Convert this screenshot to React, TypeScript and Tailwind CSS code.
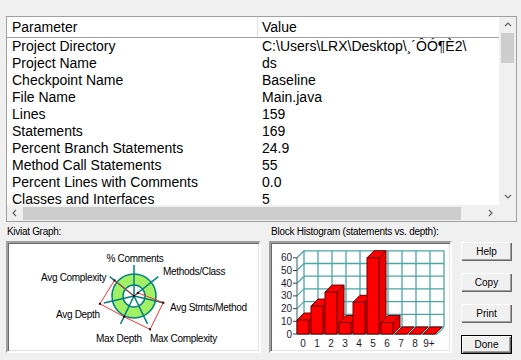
import React from "react";

const ROWS: [string, string][] = [
  ["Project Directory", "C:\\Users\\LRX\\Desktop\\¸´ÔÓ¶È2\\"],
  ["Project Name", "ds"],
  ["Checkpoint Name", "Baseline"],
  ["File Name", "Main.java"],
  ["Lines", "159"],
  ["Statements", "169"],
  ["Percent Branch Statements", "24.9"],
  ["Method Call Statements", "55"],
  ["Percent Lines with Comments", "0.0"],
  ["Classes and Interfaces", "5"],
];

// kiviat: 7 axes clockwise from the top, r = plotted radius of the red polygon
const CX = 134;
const CY = 296;
const AXES = [
  { label: "% Comments", r: 0, lx: 135, ly: 261.5, anchor: "middle" },
  { label: "Methods/Class", r: 5, lx: 163, ly: 274.5, anchor: "start" },
  { label: "Avg Stmts/Method", r: 30, lx: 170, ly: 310.5, anchor: "start" },
  { label: "Max Complexity", r: 37, lx: 150, ly: 341.5, anchor: "start" },
  { label: "Max Depth", r: 23, lx: 96, ly: 341.5, anchor: "start" },
  { label: "Avg Depth", r: 35, lx: 56, ly: 317.5, anchor: "start" },
  { label: "Avg Complexity", r: 25, lx: 41, ly: 280.5, anchor: "start" },
];

const pt = (i: number, r: number) => {
  const a = ((-90 + (i * 360) / 7) * Math.PI) / 180;
  return [CX + r * Math.cos(a), CY + r * Math.sin(a)];
};

// histogram geometry (page coords)
const X0 = 297;
const Y0 = 334;
const K = 1.27;
const D = 7;
const SLOT = 14;
const BW = 12;
const BLOCKS = [
  { label: "0", v: 11 },
  { label: "1", v: 22 },
  { label: "2", v: 33 },
  { label: "3", v: 9 },
  { label: "4", v: 25 },
  { label: "5", v: 60 },
  { label: "6", v: 9 },
  { label: "7", v: 0 },
  { label: "8", v: 0 },
  { label: "9+", v: 0 },
];
const LEVELS = [0, 10, 20, 30, 40, 50, 60];
const GRID = "#4aa6a6";

function Chevron({ dir }: { dir: "up" | "down" | "left" | "right" }) {
  const pts = {
    up: "1,5 4,2 7,5",
    down: "1,2 4,5 7,2",
    left: "5,1 2,4 5,7",
    right: "2,1 5,4 2,7",
  }[dir];
  return (
    <svg width="8" height="8" viewBox="0 0 8 8" className="block">
      <polyline points={pts} fill="none" stroke="#606060" strokeWidth="1.2" />
    </svg>
  );
}

function Kiviat() {
  const poly = AXES.map((a, i) => pt(i, a.r).join(",")).join(" ");
  return (
    <svg width="251" height="108" viewBox="8 243 251 108" className="block">
      <circle cx={CX} cy={CY} r={22} fill="#a2f064" stroke="#008080" strokeWidth="1.5" />
      <circle cx={CX} cy={CY} r={11} fill="#ffffff" stroke="#008080" strokeWidth="1.5" />
      {AXES.map((a, i) => {
        const [x, y] = pt(i, 31);
        return <line key={a.label} x1={CX} y1={CY} x2={x} y2={y} stroke="#008080" strokeWidth="1.5" />;
      })}
      <polygon points={poly} fill="none" stroke="#ff3030" strokeWidth="1" />
      {AXES.map((a, i) => {
        const [x, y] = pt(i, a.r);
        return <rect key={a.label} x={x - 1} y={y - 1} width="2" height="2" fill="#300000" />;
      })}
      {AXES.map((a) => (
        <text key={a.label} x={a.lx} y={a.ly} fontSize="10" letterSpacing="-0.3" textAnchor={a.anchor} fill="#000000">
          {a.label}
        </text>
      ))}
    </svg>
  );
}

function Histogram() {
  const right = X0 + SLOT * 10;
  return (
    <svg width="179" height="108" viewBox="271 243 179 108" className="block">
      {/* back wall */}
      {LEVELS.map((v) => (
        <line key={"h" + v} x1={X0 + D} y1={Y0 - v * K - D} x2={right + D} y2={Y0 - v * K - D} stroke={GRID} strokeWidth="1.3" />
      ))}
      {Array.from({ length: 11 }).map((_, i) => (
        <line key={"v" + i} x1={X0 + D + i * SLOT} y1={Y0 - D} x2={X0 + D + i * SLOT} y2={Y0 - D - 60 * K} stroke={GRID} strokeWidth="1.3" />
      ))}
      {/* left wall */}
      {LEVELS.map((v) => (
        <line key={"d" + v} x1={X0} y1={Y0 - v * K} x2={X0 + D} y2={Y0 - v * K - D} stroke={GRID} strokeWidth="1.3" />
      ))}
      <line x1={X0} y1={Y0 - 60 * K} x2={X0} y2={Y0} stroke="#5a8a8a" strokeWidth="1.3" />
      {/* floor */}
      <line x1={X0} y1={Y0} x2={right} y2={Y0} stroke="#5a8a8a" strokeWidth="1.3" />
      <line x1={right} y1={Y0} x2={right + D} y2={Y0 - D} stroke={GRID} strokeWidth="1.3" />
      {/* y ticks + labels */}
      {LEVELS.map((v) => (
        <g key={"t" + v}>
          <line x1={X0 - 4} y1={Y0 - v * K} x2={X0} y2={Y0 - v * K} stroke="#404040" strokeWidth="1" />
          <text x={292} y={Y0 - v * K + 3.5} fontSize="10" textAnchor="end" fill="#1a1a2a">
            {v}
          </text>
        </g>
      ))}
      {/* bars */}
      {BLOCKS.map((b, i) => {
        const x = X0 + i * SLOT;
        const yt = Y0 - b.v * K;
        return (
          <g key={b.label} stroke="#700000" strokeWidth="1" strokeLinejoin="round">
            {b.v > 0 && (
              <polygon points={`${x + BW},${yt} ${x + BW + D},${yt - D} ${x + BW + D},${Y0 - D} ${x + BW},${Y0}`} fill="#ee0000" />
            )}
            <polygon points={`${x},${yt} ${x + D},${yt - D} ${x + BW + D},${yt - D} ${x + BW},${yt}`} fill="#ff0000" />
            {b.v > 0 && <rect x={x} y={yt} width={BW} height={Y0 - yt} fill="#ff0000" />}
          </g>
        );
      })}
      {BLOCKS.map((b, i) => (
        <text key={"l" + b.label} x={X0 + i * SLOT + 6} y={346.5} fontSize="10" textAnchor="middle" fill="#1a1a2a">
          {b.label}
        </text>
      ))}
    </svg>
  );
}

const BTN =
  "h-[19px] w-[51px] bg-[#f0f0f0] text-[10px] leading-[17px] text-black shadow-[inset_1px_1px_0_#ffffff,inset_-1px_-1px_0_#696969,inset_-2px_-2px_0_#a0a0a0]";

const FRAME =
  "h-[112px] border-2 border-t-[#a0a0a0] border-l-[#a0a0a0] border-b-white border-r-white bg-white shadow-[inset_1px_1px_0_#696969,inset_-1px_-1px_0_#e3e3e3]";

export default function App() {
  return (
    <div className="w-[521px] h-[360px] overflow-hidden bg-[#f0f0f0] pt-[16px] px-[6px] font-['Liberation_Sans',Arial,sans-serif] text-black">
      {/* Parameter / Value list */}
      <div className="h-[206px] w-[511px] border border-[#a0a0a0] bg-white grid grid-cols-[1fr_17px] grid-rows-[1fr_16px]">
        <div className="overflow-hidden">
          <div className="flex h-[21px] border-b border-[#a0a0a0] text-[14px] leading-[21px]">
            <div className="w-[251px] pl-[5px] border-r border-[#e0e0e0]">Parameter</div>
            <div className="pl-[4px]">Value</div>
          </div>
          {ROWS.map(([k, v]) => (
            <div key={k} className="flex h-[17px] text-[14px] leading-[17px] whitespace-nowrap">
              <div className="w-[251px] pl-[5px]">{k}</div>
              <div className="pl-[4px]">{v}</div>
            </div>
          ))}
        </div>
        <div className="bg-[#f0f0f0] flex flex-col">
          <div className="h-[16px] flex items-center justify-center">
            <Chevron dir="up" />
          </div>
          <div className="mx-[2px] h-[30px] bg-[#cdcdcd]" />
          <div className="flex-1" />
          <div className="h-[16px] flex items-center justify-center">
            <Chevron dir="down" />
          </div>
        </div>
        <div className="bg-[#f0f0f0] flex items-center">
          <div className="w-[16px] flex justify-center">
            <Chevron dir="left" />
          </div>
          <div className="h-[13px] w-[438px] bg-[#cdcdcd]" />
          <div className="flex-1" />
          <div className="w-[16px] flex justify-center">
            <Chevron dir="right" />
          </div>
        </div>
        <div className="bg-[#f0f0f0]" />
      </div>

      {/* graphs + buttons */}
      <div className="flex">
        <div className="w-[255px]">
          <div className="mt-[4px] mb-[3px] h-[12px] pl-[1px] text-[10px] leading-[12px] tracking-[-0.3px]">Kiviat Graph:</div>
          <div className={FRAME}>
            <Kiviat />
          </div>
        </div>
        <div className="ml-[8px] w-[183px]">
          <div className="mt-[4px] mb-[3px] h-[12px] pl-[2px] text-[10px] leading-[12px] tracking-[-0.25px] whitespace-nowrap">
            Block Histogram (statements vs. depth):
          </div>
          <div className={FRAME}>
            <Histogram />
          </div>
        </div>
        <div className="ml-[9px] w-[51px] pt-[20px] flex flex-col gap-[12px]">
          <button className={BTN}>Help</button>
          <button className={BTN}>Copy</button>
          <button className={BTN}>Print</button>
          <button className={BTN + " border border-black"}>Done</button>
        </div>
      </div>
    </div>
  );
}
